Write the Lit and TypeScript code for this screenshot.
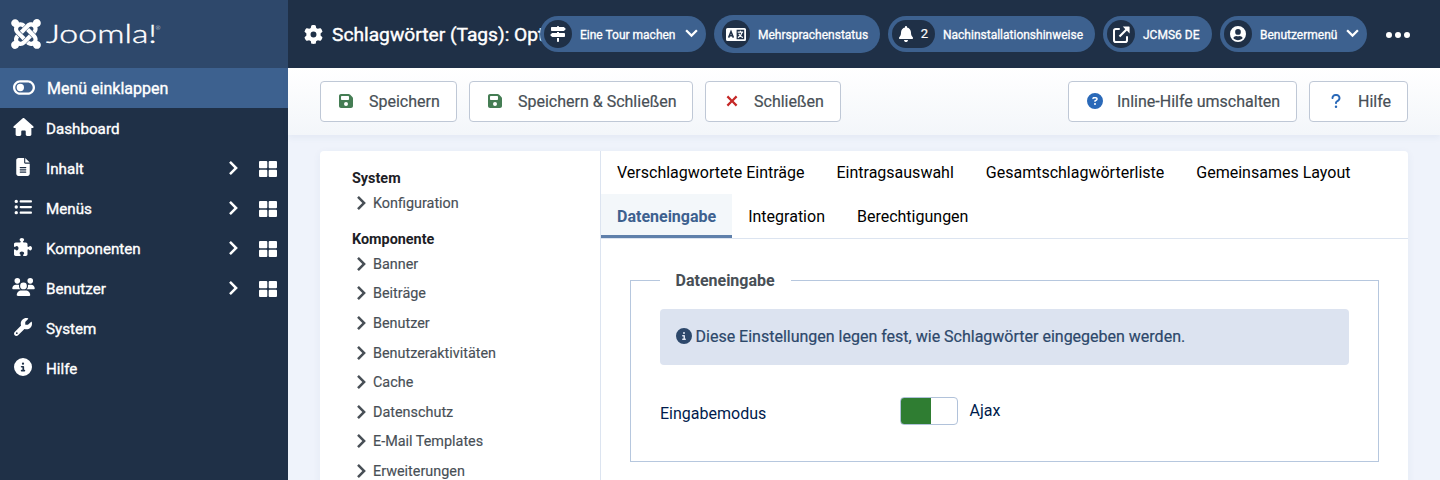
import { LitElement, html, css } from "lit";
import { customElement, property } from "lit/decorators.js";

const listBar = "c-17.7 0-32 14.3-32 32s14.3 32 32 32H480c17.7 0 32-14.3 32-32s-14.3-32-32-32H192z";

/* [viewBox width, viewBox height, path] */
const ICONS: Record<string, [number, number, string]> = {
  joomla: [448, 512, "M.6 92.1C.6 58.8 27.4 32 60.4 32c30 0 54.5 21.9 59.2 50.2 32.6-7.6 67.1.6 96.5 30l-44.3 44.3c-20.5-20.5-42.6-16.3-55.4-3.5-14.3 14.3-14.3 37.9 0 52.2l99.5 99.5-44 44.3c-87.7-87.2-49.7-49.7-99.8-99.7-26.8-26.5-35-64.8-24.8-98.9C20.4 144.6.6 120.7.6 92.1zm129.5 116.4l44.3 44.3c10-10 89.7-89.7 99.7-99.8 14.3-14.3 37.6-14.3 51.9 0 12.8 12.8 17 35-3.5 55.4l44 44.3c31.2-31.2 38.5-67.6 28.9-101.2 29.2-4.1 51.9-29.2 51.9-59.5 0-33.2-26.8-60.1-59.8-60.1-30.3 0-55.4 22.5-59.5 51.6-33.8-9.9-71.7-1.5-98.3 25.1-18.3 19.1-71.1 71.5-99.6 99.9zm266.3 152.2c8.2-32.7-.9-68.5-26.3-93.9-11.8-12.2 5 4.7-99.5-99.7l-44.3 44.3 99.7 99.7c14.3 14.3 14.3 37.6 0 51.9-12.8 12.8-35 17-55.4-3.5l-44 44.3c27.6 30.2 68 38.8 102.7 28 5.5 27.4 29.7 48.1 58.9 48.1 33 0 59.8-26.8 59.8-60.1 0-30.2-22.5-55-51.6-59.1zm-84.3-53.1l-44-44.3c-87 86.4-50.4 50.4-99.7 99.8-14.3 14.3-37.6 14.3-51.9 0-13.1-13.4-16.9-35.3 3.2-55.4l-44-44.3c-30.2 30.2-38 65.2-29.5 98.3-26.7 6-46.2 29.9-46.2 58.2C0 453.2 26.8 480 59.8 480c28.6 0 52.5-19.8 58.6-46.7 32.7 8.2 68.5-.6 94.2-26 32.1-32 12.2-12.4 99.5-99.7z"],
  gear: [512, 512, "M495.9 166.6c3.2 8.7 .5 18.4-6.4 24.6l-43.3 39.4c1.1 8.3 1.7 16.8 1.7 25.4s-.6 17.1-1.7 25.4l43.3 39.4c6.9 6.2 9.6 15.9 6.4 24.6c-4.4 11.9-9.7 23.3-15.8 34.3l-4.7 8.1c-6.6 11-14 21.4-22.1 31.2c-5.9 7.2-15.7 9.6-24.5 6.8l-55.7-17.7c-13.4 10.3-28.2 18.9-44 25.4l-12.5 57.1c-2 9.1-9 16.3-18.2 17.8c-13.8 2.3-28 3.5-42.5 3.5s-28.7-1.2-42.5-3.5c-9.2-1.5-16.2-8.7-18.2-17.8l-12.5-57.1c-15.8-6.5-30.6-15.1-44-25.4L83.1 425.9c-8.8 2.8-18.6 .3-24.5-6.8c-8.1-9.8-15.5-20.2-22.1-31.2l-4.7-8.1c-6.1-11-11.4-22.4-15.8-34.3c-3.2-8.7-.5-18.4 6.4-24.6l43.3-39.4C64.6 273.1 64 264.6 64 256s.6-17.1 1.7-25.4L22.4 191.2c-6.9-6.2-9.6-15.9-6.4-24.6c4.4-11.9 9.7-23.3 15.8-34.3l4.7-8.1c6.6-11 14-21.4 22.1-31.2c5.9-7.2 15.7-9.6 24.5-6.8l55.7 17.7c13.4-10.3 28.2-18.9 44-25.4l12.5-57.1c2-9.1 9-16.3 18.2-17.8C227.3 1.2 241.5 0 256 0s28.7 1.2 42.5 3.5c9.2 1.5 16.2 8.7 18.2 17.8l12.5 57.1c15.8 6.5 30.6 15.1 44 25.4l55.7-17.7c8.8-2.8 18.6-.3 24.5 6.8c8.1 9.8 15.5 20.2 22.1 31.2l4.7 8.1c6.1 11 11.4 22.4 15.8 34.3zM256 336a80 80 0 1 0 0-160 80 80 0 1 0 0 160z"],
  toggle: [576, 384, "M384 60c73 0 132 59 132 132s-59 132-132 132H192c-73 0-132-59-132-132S119 60 192 60H384zM576 192C576 86 490 0 384 0H192C86 0 0 86 0 192S86 384 192 384H384c106 0 192-86 192-192zM192 288a96 96 0 1 0 0-192 96 96 0 1 0 0 192z"],
  home: [576, 512, "M575.8 255.5c0 18-15 32.1-32 32.1h-32l.7 160.2c0 2.7-.2 5.4-.5 8.1V472c0 22.1-17.9 40-40 40H456c-1.1 0-2.2 0-3.3-.1c-1.4 .1-2.8 .1-4.2 .1H416 392c-22.1 0-40-17.9-40-40V448 384c0-17.7-14.3-32-32-32H256c-17.7 0-32 14.3-32 32v64 24c0 22.1-17.9 40-40 40H160 128.1c-1.5 0-3-.1-4.5-.2c-1.2 .1-2.4 .2-3.6 .2H104c-22.1 0-40-17.9-40-40V360c0-.9 0-1.900 .1-2.800V287.600H32c-18 0-32-14-32-32.100c0-9 3-17 10-24L266.400 8c7-7 15-8 22-8s15 2 21 7L564.800 231.500c8 7 12 15 11 24z"],
  file: [384, 512, "M64 0C28.7 0 0 28.7 0 64V448c0 35.3 28.7 64 64 64H320c35.3 0 64-28.7 64-64V160H256c-17.7 0-32-14.3-32-32V0H64zM256 0V128H384L256 0zM112 256H272c8.8 0 16 7.2 16 16s-7.2 16-16 16H112c-8.8 0-16-7.2-16-16s7.2-16 16-16zm0 64H272c8.8 0 16 7.2 16 16s-7.2 16-16 16H112c-8.8 0-16-7.2-16-16s7.2-16 16-16zm0 64H272c8.8 0 16 7.2 16 16s-7.2 16-16 16H112c-8.8 0-16-7.2-16-16s7.2-16 16-16z"],
  list: [512, 512, `M64 144a48 48 0 1 0 0-96 48 48 0 1 0 0 96zM192 64${listBar}M192 224${listBar}M192 384${listBar}M64 464a48 48 0 1 0 0-96 48 48 0 1 0 0 96zm48-208a48 48 0 1 0 -96 0 48 48 0 1 0 96 0z`],
  puzzle: [512, 512, "M192 104.8c0-9.2-5.8-17.3-13.2-22.8C167.2 73.3 160 61.3 160 48c0-26.5 28.7-48 64-48s64 21.5 64 48c0 13.3-7.2 25.3-18.8 34c-7.4 5.5-13.2 13.6-13.2 22.8c0 12.8 10.4 23.2 23.2 23.2H336c26.5 0 48 21.5 48 48v56.8c0 12.8 10.4 23.2 23.2 23.2c9.2 0 17.3-5.8 22.8-13.2c8.7-11.6 20.7-18.8 34-18.8c26.5 0 48 28.7 48 64s-21.5 64-48 64c-13.3 0-25.3-7.2-34-18.8c-5.5-7.4-13.6-13.2-22.8-13.2c-12.8 0-23.2 10.4-23.2 23.2V464c0 26.5-21.5 48-48 48H279.2c-12.8 0-23.2-10.4-23.2-23.2c0-9.2 5.8-17.3 13.2-22.8c11.6-8.7 18.8-20.7 18.8-34c0-26.5-28.7-48-64-48s-64 21.5-64 48c0 13.3 7.2 25.3 18.8 34c7.4 5.5 13.2 13.6 13.2 22.8c0 12.8-10.4 23.2-23.2 23.2H48c-26.5 0-48-21.5-48-48V343.2C0 330.4 10.4 320 23.2 320c9.2 0 17.3 5.8 22.8 13.2C54.7 344.8 66.7 352 80 352c26.5 0 48-28.7 48-64s-21.5-64-48-64c-13.3 0-25.3 7.2-34 18.8C40.5 250.2 32.4 256 23.2 256C10.4 256 0 245.6 0 232.8V176c0-26.5 21.5-48 48-48H168.8c12.8 0 23.2-10.4 23.2-23.2z"],
  users: [640, 512, "M144 0a80 80 0 1 1 0 160A80 80 0 1 1 144 0zM512 0a80 80 0 1 1 0 160A80 80 0 1 1 512 0zM0 298.7C0 239.8 47.8 192 106.7 192h42.7c15.900 0 31 3.500 44.600 9.700c-1.300 7.200-1.900 14.700-1.900 22.300c0 38.200 16.800 72.500 43.300 96c-.2 0-.4 0-.7 0H21.300C9.600 320 0 310.400 0 298.700zM405.300 320c-.2 0-.4 0-.7 0c26.600-23.500 43.300-57.800 43.300-96c0-7.600-.7-15-1.900-22.300c13.600-6.300 28.700-9.700 44.600-9.700h42.700C592.200 192 640 239.800 640 298.700c0 11.800-9.600 21.300-21.300 21.300H405.300zM224 224a96 96 0 1 1 192 0 96 96 0 1 1 -192 0zM128 485.300C128 411.700 187.700 352 261.300 352H378.700C452.300 352 512 411.700 512 485.300c0 14.700-11.900 26.700-26.700 26.700H154.700c-14.700 0-26.700-11.900-26.700-26.700z"],
  wrench: [512, 512, "M352 320c88.4 0 160-71.6 160-160c0-15.3-2.2-30.1-6.2-44.2c-3.1-10.8-16.4-13.2-24.3-5.3l-76.8 76.8c-3 3-7.1 4.7-11.3 4.7H336c-8.8 0-16-7.2-16-16V118.6c0-4.2 1.7-8.3 4.7-11.3l76.8-76.8c7.9-7.9 5.4-21.2-5.3-24.3C382.1 2.2 367.3 0 352 0C263.6 0 192 71.6 192 160c0 19.1 3.4 37.5 9.5 54.5L19.9 396.1C7.2 408.8 0 426.1 0 444.1C0 481.6 30.4 512 67.9 512c18 0 35.3-7.2 48-19.900L297.500 310.500c17 6.200 35.400 9.500 54.500 9.500zM80 408a24 24 0 1 1 0 48 24 24 0 1 1 0-48z"],
  info: [512, 512, "M256 512A256 256 0 1 0 256 0a256 256 0 1 0 0 512zM216 336h24V272H216c-13.3 0-24-10.7-24-24s10.7-24 24-24h48c13.3 0 24 10.7 24 24v88h8c13.3 0 24 10.7 24 24s-10.7 24-24 24H216c-13.3 0-24-10.7-24-24s10.7-24 24-24zm40-208a32 32 0 1 1 0 64 32 32 0 1 1 0-64z"],
  circleQuestion: [512, 512, "M256 512A256 256 0 1 0 256 0a256 256 0 1 0 0 512zM169.8 165.3c7.9-22.3 29.1-37.3 52.8-37.3h58.3c34.9 0 63.1 28.3 63.1 63.1c0 22.6-12.1 43.5-31.7 54.8L280 264.4c-.2 13-10.9 23.6-24 23.6c-13.3 0-24-10.7-24-24V250.5c0-8.6 4.6-16.5 12.1-20.8l44.3-25.4c4.7-2.7 7.6-7.7 7.6-13.1c0-8.4-6.8-15.1-15.1-15.1H222.6c-3.4 0-6.4 2.1-7.5 5.3l-.4 1.2c-4.4 12.5-18.2 19-30.6 14.6s-19-18.2-14.6-30.6l.4-1.2zM224 352a32 32 0 1 1 64 0 32 32 0 1 1 -64 0z"],
  question: [320, 512, "M80 160c0-35.3 28.7-64 64-64h32c35.3 0 64 28.7 64 64v3.6c0 21.8-11.1 42.1-29.4 53.8l-42.2 27.1c-25.2 16.2-40.4 44.1-40.4 74V320c0 17.7 14.3 32 32 32s32-14.3 32-32v-1.4c0-8.2 4.2-15.8 11-20.2l42.2-27.1c36.6-23.6 58.8-64.1 58.8-107.7V160c0-70.7-57.3-128-128-128H144C73.3 32 16 89.3 16 160c0 17.7 14.3 32 32 32s32-14.3 32-32zm80 320a40 40 0 1 0 0-80 40 40 0 1 0 0 80z"],
  signs: [512, 512, "M224 32H64C46.3 32 32 46.3 32 64v64c0 17.7 14.3 32 32 32H441.4c4.2 0 8.3-1.7 11.3-4.7l48-48c6.2-6.2 6.2-16.4 0-22.6l-48-48c-3-3-7.1-4.7-11.3-4.7H288c0-17.7-14.3-32-32-32s-32 14.3-32 32zM480 256c0-17.7-14.3-32-32-32H288V192H224v32H70.6c-4.2 0-8.3 1.7-11.3 4.7l-48 48c-6.2 6.2-6.2 16.4 0 22.6l48 48c3 3 7.1 4.7 11.3 4.7H448c17.7 0 32-14.3 32-32V256zM288 480V384H224v96c0 17.7 14.3 32 32 32s32-14.3 32-32z"],
  bell: [448, 512, "M224 0c-17.7 0-32 14.3-32 32V51.2C119 66 64 130.6 64 208v18.8c0 47-17.3 92.4-48.5 127.6l-7.4 8.3c-8.4 9.4-10.4 22.9-5.3 34.4S19.4 416 32 416H416c12.6 0 24-7.4 29.2-18.9s3.1-25-5.3-34.4l-7.4-8.3C401.3 319.2 384 273.9 384 226.8V208c0-77.4-55-142-128-156.8V32c0-17.7-14.3-32-32-32zm45.3 493.3c12-12 18.7-28.3 18.7-45.3H224 160c0 17 6.7 33.3 18.7 45.3s28.3 18.7 45.3 18.7s33.3-6.7 45.3-18.7z"],
  floppy: [448, 448, "M64 0C28.7 0 0 28.7 0 64V384c0 35.3 28.7 64 64 64H384c35.3 0 64-28.7 64-64V141.3c0-17-6.7-33.3-18.7-45.3L352 18.7C340 6.7 323.7 0 306.7 0H64zm0 96c0-17.7 14.3-32 32-32H288c17.7 0 32 14.3 32 32v64c0 17.7-14.3 32-32 32H96c-17.7 0-32-14.3-32-32V96zM224 256a64 64 0 1 1 0 128 64 64 0 1 1 0-128z"],
  user: [496, 496, "M248 0a248 248 0 1 0 0 496 248 248 0 1 0 0-496zM248 96a88 88 0 1 1 0 176 88 88 0 1 1 0-176zM248 440c-58.700 0-111.300-26.600-146.500-68.200 18.800-35.400 55.600-59.800 98.500-59.800 8 4 26 8 48 8s40-4 48-8c42.900 0 79.700 24.400 98.500 59.800C359.300 413.400 306.700 440 248 440z"],
  close: [12, 12, "M2.200.6 6 4.400 9.800.6 11.400 2.200 7.600 6l3.800 3.800-1.600 1.600L6 7.600l-3.800 3.800L.6 9.800 4.400 6 .6 2.200z"],
  grid: [18, 16, "M1 0H7.300a1 1 0 0 1 1 1V6.200a1 1 0 0 1-1 1H1a1 1 0 0 1-1-1V1a1 1 0 0 1 1-1zM10.700 0H17a1 1 0 0 1 1 1V6.200a1 1 0 0 1-1 1H10.700a1 1 0 0 1-1-1V1a1 1 0 0 1 1-1zM1 8.800H7.300a1 1 0 0 1 1 1V15a1 1 0 0 1-1 1H1a1 1 0 0 1-1-1V9.800a1 1 0 0 1 1-1zM10.700 8.800H17a1 1 0 0 1 1 1V15a1 1 0 0 1-1 1H10.700a1 1 0 0 1-1-1V9.800a1 1 0 0 1 1-1z"],
  right: [9, 14, "M.1 1.800 1.900 0 8.900 7 1.900 14 .1 12.200 5.300 7z"],
  down: [13, 9, "M.3 2 1.900.4 6.500 5 11.100.4 12.700 2 6.500 8.200z"],
  dots: [24, 6, "M3 0a3 3 0 1 0 0 6 3 3 0 1 0 0-6zM12 0a3 3 0 1 0 0 6 3 3 0 1 0 0-6zM21 0a3 3 0 1 0 0 6 3 3 0 1 0 0-6z"],
};

const icon = (name: string, w: number, h: number) => {
  const [vw, vh, d] = ICONS[name];
  return html`<svg class="icon" width=${w} height=${h} viewBox="0 0 ${vw} ${vh}" aria-hidden="true">
    <path fill="currentColor" fill-rule="evenodd" d=${d}></path>
  </svg>`;
};

const languageIcon = html`<svg class="icon" width="20" height="13" viewBox="0 0 20 13">
  <path fill="currentColor" fill-rule="evenodd" d="M1.500 0h17A1.500 1.500 0 0 1 20 1.500v10a1.500 1.500 0 0 1-1.500 1.500h-17A1.500 1.500 0 0 1 0 11.500v-10A1.500 1.500 0 0 1 1.500 0zM10.600 1.800v9.400h7.600V1.800z"></path>
  <path fill="none" stroke="#203047" stroke-width="1.500" d="M2.600 9.600 5 3.600l2.400 6M3.500 7.800h3"></path>
  <path fill="none" stroke="currentColor" stroke-width="1.200" d="M11.700 4.200h5.400M14.400 2.800v1.400M16 4.600c-.6 2.400-2 4-4.100 5M12.800 5.800c.8 1.700 2 2.900 4 3.800"></path>
</svg>`;

const externalIcon = html`<svg class="icon" width="17" height="17" viewBox="0 0 17 17">
  <path fill="none" stroke="currentColor" stroke-width="2" stroke-linecap="round" stroke-linejoin="round" d="M6 3H2.800A1.800 1.800 0 0 0 1 4.800v9.400A1.800 1.800 0 0 0 2.800 16h9.400a1.800 1.800 0 0 0 1.800-1.800V11"></path>
  <path fill="none" stroke="currentColor" stroke-width="2.200" d="M6.500 10.500 14 3"></path>
  <path fill="currentColor" d="M9.800.6H16a.6.6 0 0 1 .6.6v6.200L14.500 5.300 11.900 2.700z"></path>
</svg>`;

const shared = css`
  :host { display: block; box-sizing: border-box; font-family: Roboto, sans-serif; }
  * { box-sizing: border-box; }
  .icon { display: block; flex: none; }
`;

@customElement("side-menu")
class SideMenu extends LitElement {
  static styles = [shared, css`
    :host { width: 288px; height: 480px; background: hsl(214, 40%, 20%); color: #fff; }
    .logo { height: 68px; background: hsl(214, 40%, 30%); display: flex; align-items: center; padding-left: 11px; gap: 4px; }
    .wordmark { display: block; }
    .wordmark text { fill: #fff; stroke: #fff; stroke-width: 0.35px; font-family: Lato, sans-serif; font-weight: 300; }
    .wordmark .mark { stroke: none; }
    .row { height: 40px; display: flex; align-items: center; font-size: 15.2px; -webkit-text-stroke: 0.35px; }
    .row.toggle { background: hsl(214, 40%, 40%); font-size: 16px; }
    .row.toggle .label { padding: 0 0 0 1px; }
    .row.toggle .glyph { padding: 0 0 1px 1px; }
    .glyph { width: 46px; padding-bottom: 2px; display: flex; justify-content: center; }
    .label { flex: 1; padding-top: 2px; }
    .arrow { margin-right: 21px; }
    .tiles { margin-right: 11px; padding-top: 2px; }
  `];
  render() {
    const rows: [string, number, number, string, boolean][] = [
      ["home", 21, 18, "Dashboard", false],
      ["file", 14, 18, "Inhalt", true],
      ["list", 18, 18, "Menüs", true],
      ["puzzle", 18, 18, "Komponenten", true],
      ["users", 23, 18, "Benutzer", true],
      ["wrench", 18, 18, "System", false],
      ["info", 18, 18, "Hilfe", false],
    ];
    return html`
      <div class="logo">
        ${icon("joomla", 30, 34)}
        <svg class="wordmark" width="120" height="32" viewBox="0 0 120 32">
          <text x="1" y="25" font-size="24.500" textLength="111" lengthAdjust="spacingAndGlyphs">Joomla!</text>
          <text class="mark" x="110.500" y="12" font-size="6">®</text>
        </svg>
      </div>
      <div class="row toggle"><span class="glyph">${icon("toggle", 22, 15)}</span><span class="label">Menü einklappen</span></div>
      ${rows.map(([i, w, h, label, sub]) => html`<div class="row">
        <span class="glyph">${icon(i, w, h)}</span><span class="label">${label}</span>
        ${sub ? html`<span class="arrow">${icon("right", 9, 14)}</span><span class="tiles">${icon("grid", 18, 16)}</span>` : ""}
      </div>`)}
    `;
  }
}

@customElement("status-pill")
class StatusPill extends LitElement {
  @property({ type: Boolean }) caret = false;
  @property() label = "";
  @property() count = "";
  @property({ attribute: false }) glyph: unknown;
  static styles = [shared, css`
    :host { display: flex; align-items: center; height: 36px; padding: 0 8px 0 4px; border-radius: 19px; background: hsl(214, 40%, 40%); color: #fff; position: relative; }
    .badge { min-width: 28px; height: 28px; border-radius: 14px; background: hsl(214, 40%, 20%); display: flex; align-items: center; justify-content: center; flex: none; }
    .badge.wide { width: 43px; gap: 8px; font-size: 13px; -webkit-text-stroke: 0.2px; }
    .badge.wide span { margin-top: -1px; }
    .label { font-size: 12px; white-space: nowrap; margin: 1px 0 0 8px; -webkit-text-stroke: 0.3px; }
    .caret { margin: 0 0 2px auto; }
  `];
  render() {
    return html`<span class="badge ${this.count ? "wide" : ""}">${this.glyph}${this.count ? html`<span>${this.count}</span>` : ""}</span>
      <span class="label">${this.label}</span>
      ${this.caret ? html`<span class="caret">${icon("down", 13, 9)}</span>` : ""}`;
  }
}

@customElement("top-bar")
class TopBar extends LitElement {
  static styles = [shared, css`
    :host { display: flex; align-items: center; height: 68px; padding-left: 16px; background: hsl(214, 40%, 20%); color: #fff; }
    .title { width: 236px; display: flex; align-items: center; gap: 9px; flex: none; }
    .title h1 { margin: 0; padding-top: 1px; font-size: 19.2px; font-weight: 400; line-height: 24px; white-space: nowrap; width: 212px; overflow: hidden; flex: none; -webkit-text-stroke: 0.4px; }
    .pills { display: flex; align-items: center; gap: 8px; }
    .tour { width: 166px; }
    .lang { width: 166px; height: 38px; padding-left: 8px; }
    .post { width: 207px; }
    .site { width: 109px; }
    .user { width: 147px; }
    .more { margin-left: 19px; padding-top: 1px; }
  `];
  render() {
    return html`
      <div class="title">${icon("gear", 19, 19)}<h1>Schlagwörter (Tags): Optionen</h1></div>
      <div class="pills">
        <status-pill class="tour" caret label="Eine Tour machen" .glyph=${icon("signs", 16, 16)}></status-pill>
        <status-pill class="lang" label="Mehrsprachenstatus" .glyph=${languageIcon}></status-pill>
        <status-pill class="post" label="Nachinstallationshinweise" count="2" .glyph=${icon("bell", 14, 16)}></status-pill>
        <status-pill class="site" label="JCMS6 DE" .glyph=${externalIcon}></status-pill>
        <status-pill class="user" caret label="Benutzermenü" .glyph=${icon("user", 16, 16)}></status-pill>
      </div>
      <span class="more">${icon("dots", 24, 6)}</span>
    `;
  }
}

@customElement("tool-bar")
class ToolBar extends LitElement {
  static styles = [shared, css`
    :host { display: flex; gap: 12px; height: 67px; padding: 13px 32px 0; background: linear-gradient(#fff, #f3f6fa); box-shadow: 0 3px 6px rgba(50, 80, 140, 0.06); }
    .btn { height: 41px; border: 1px solid #bfc8d6; border-radius: 4px; background: #fff; display: flex; align-items: center; font-size: 16px; color: #484f56; white-space: nowrap; -webkit-text-stroke: 0.2px; }
    .glyph { width: 50px; padding: 0 0 1px 1px; display: flex; justify-content: center; flex: none; }
    .glyph + span { margin-left: -2px; }
    .green { color: #457d54; padding-right: 1px; }
    .red { color: #c52827; }
    .blue { color: #2a69b8; }
    .save { width: 137px; }
    .saveclose { width: 224px; }
    .cancel { width: 136px; }
    .inline { width: 229px; margin-left: auto; }
    .help { width: 99px; }
  `];
  render() {
    return html`
      <div class="btn save"><span class="glyph green">${icon("floppy", 14, 14)}</span><span>Speichern</span></div>
      <div class="btn saveclose"><span class="glyph green">${icon("floppy", 14, 14)}</span><span>Speichern &amp; Schließen</span></div>
      <div class="btn cancel"><span class="glyph red">${icon("close", 12, 12)}</span><span>Schließen</span></div>
      <div class="btn inline"><span class="glyph blue">${icon("circleQuestion", 16, 16)}</span><span>Inline-Hilfe umschalten</span></div>
      <div class="btn help"><span class="glyph blue">${icon("question", 10, 16)}</span><span>Hilfe</span></div>
    `;
  }
}

@customElement("config-panel")
class ConfigPanel extends LitElement {
  static styles = [shared, css`
    :host { display: flex; height: 345px; margin: 16px 32px 0; background: #fff; border-radius: 4px 4px 0 0; box-shadow: 0 2px 8px rgba(50, 80, 140, 0.06); }
    .nav { width: 281px; border-right: 1px solid #dce4f0; padding: 16px 0 0 32px; flex: none; font-size: 14.4px; color: #484f56; -webkit-text-stroke: 0.15px; }
    .nav h2 { margin: 0; padding-top: 1px; font-size: 14.4px; height: 22px; line-height: 22px; font-weight: 700; color: #1c2025; -webkit-text-stroke: 0; }
    .nav ul { list-style: none; margin: 0 0 9px; padding: 0; }
    .nav li { height: 29.6px; display: flex; align-items: center; gap: 7px; padding-left: 5px; }
    .nav .icon { margin-bottom: 1px; }
    .main { flex: 1; min-width: 0; }
    .tabs { display: flex; flex-wrap: wrap; border-bottom: 1px solid #dce4f0; font-size: 16px; color: #000; height: 88px; align-content: flex-start; }
    .tab { height: 43px; padding: 0 16px; display: flex; align-items: center; }
    .tab.active { background: #f3f7fa; box-shadow: inset 0 -3px #5f80ab; color: #3d618f; font-weight: 700; }
    .tab:nth-child(n + 5) { height: 44px; padding-top: 1px; }
    .group { margin: 31px 29px 0; padding: 18px 29px 0; border: 1px solid #b6c7de; height: 192px; min-width: 0; }
    .group legend { padding: 0 16px 0 15.500px; font-size: 16px; line-height: 21px; font-weight: 700; color: #484f56; }
    .note { height: 56px; border-radius: 4px; background: #dce3f0; color: #2d486b; display: flex; align-items: center; gap: 4px; padding: 0 0 1px 15.500px; font-size: 16px; -webkit-text-stroke: 0.2px; }
    .note .icon { margin-bottom: 1px; }
    .field { display: flex; padding-top: 31px; color: #001b4c; font-size: 16px; line-height: 24px; }
    .field .name { width: 240px; padding-top: 6px; }
    .switch { width: 58px; height: 28px; margin-top: 1px; border: 1px solid #b1c2da; border-radius: 4px; background: linear-gradient(to right, #2f7d32 30px, #fff 30px); }
    .value { padding: 3px 0 0 11.500px; }
  `];
  render() {
    const item = (t: string) => html`<li>${icon("right", 9, 14)}<span>${t}</span></li>`;
    const components = ["Banner", "Beiträge", "Benutzer", "Benutzeraktivitäten", "Cache", "Datenschutz", "E-Mail Templates", "Erweiterungen"];
    const tabs = ["Verschlagwortete Einträge", "Eintragsauswahl", "Gesamtschlagwörterliste", "Gemeinsames Layout", "Dateneingabe", "Integration", "Berechtigungen"];
    return html`
      <nav class="nav">
        <h2>System</h2><ul>${item("Konfiguration")}</ul>
        <h2>Komponente</h2><ul>${components.map(item)}</ul>
      </nav>
      <section class="main">
        <div class="tabs">${tabs.map((t) => html`<span class="tab ${t === "Dateneingabe" ? "active" : ""}">${t}</span>`)}</div>
        <fieldset class="group">
          <legend>Dateneingabe</legend>
          <div class="note">${icon("info", 16, 16)}<span>Diese Einstellungen legen fest, wie Schlagwörter eingegeben werden.</span></div>
          <div class="field"><span class="name">Eingabemodus</span><span class="switch"></span><span class="value">Ajax</span></div>
        </fieldset>
      </section>
    `;
  }
}

@customElement("app-root")
class AppRoot extends LitElement {
  static styles = [shared, css`
    :host { display: flex; width: 1440px; height: 480px; overflow: hidden; background: #eff3fb; }
    .content { flex: 1; min-width: 0; }
  `];
  render() {
    return html`<side-menu></side-menu>
      <div class="content"><top-bar></top-bar><tool-bar></tool-bar><config-panel></config-panel></div>`;
  }
}
